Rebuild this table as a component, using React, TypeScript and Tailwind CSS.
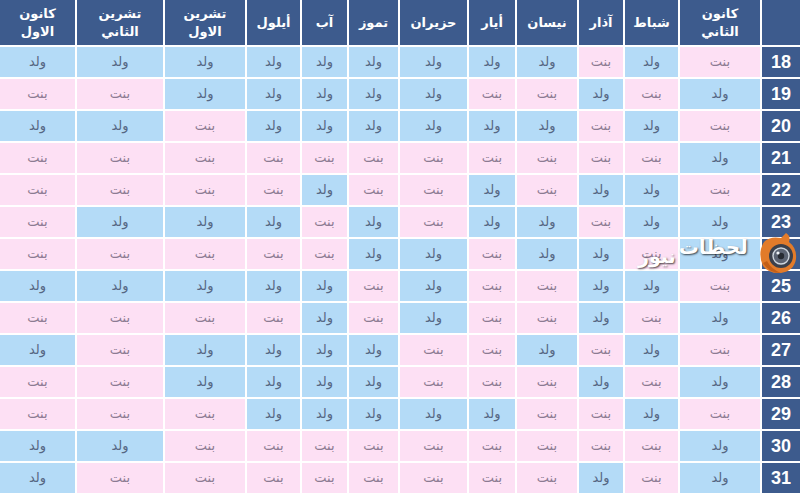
const months = [
  'كانون الاول',
  'تشرين الثاني',
  'تشرين الاول',
  'أيلول',
  'آب',
  'تموز',
  'حزيران',
  'أيار',
  'نيسان',
  'آذار',
  'شباط',
  'كانون الثاني',
]

const twoLine: Record<string, [string, string]> = {
  'كانون الاول': ['كانون', 'الاول'],
  'تشرين الثاني': ['تشرين', 'الثاني'],
  'تشرين الاول': ['تشرين', 'الاول'],
  'كانون الثاني': ['كانون', 'الثاني'],
}

// W = ولد, B = بنت, left to right as shown
const rows: [number, string][] = [
  [18, 'WWWWWWWWWBWB'],
  [19, 'BBWWWWWBBWBW'],
  [20, 'WWBWWWWWWBWB'],
  [21, 'BBBBBBBBBBBW'],
  [22, 'BBBBWBBWBWWB'],
  [23, 'BWWWBWBWWBWW'],
  [24, 'BBBBBWWBWWBW'],
  [25, 'WWWWWBWBBWWB'],
  [26, 'BBBBWBWBBWBW'],
  [27, 'WBWWWWBBWBWB'],
  [28, 'BBWWWWBBBWBW'],
  [29, 'BBBWWWWWBBWB'],
  [30, 'WWBBBBBBBBBW'],
  [31, 'WBBBBBBBBWBW'],
]

function Cell({ kind }: { kind: string }) {
  const boy = kind === 'W'
  return (
    <div
      className={
        boy
          ? 'flex items-center justify-center bg-[#b4dbf7] text-[#566783] text-[13px]'
          : 'flex items-center justify-center bg-[#fde0f4] text-[#8c7b92] text-[13px]'
      }
      dir="rtl"
    >
      {boy ? 'ولد' : 'بنت'}
    </div>
  )
}

function Logo() {
  return (
    <svg width="40" height="42" viewBox="0 0 40 42">
      <path
        d="M6 8 Q12 3 22 5 L27 0 Q32 3 30 9 Q38 15 37 26 Q35 38 22 40 Q10 41 4 33 Q0 24 2 16 Q3 11 6 8 Z"
        fill="#e27b2a"
      />
      <path d="M4 30 Q10 40 22 40 Q12 36 8 28 Z" fill="#c45f17" />
      <circle cx="22" cy="23" r="12" fill="#3b404b" />
      <circle cx="22" cy="23" r="8" fill="#5c6473" stroke="#cfd6de" strokeWidth="1.4" />
      <circle cx="22" cy="23" r="3.2" fill="#262a31" />
      <circle cx="19" cy="20" r="1.6" fill="#eef3f8" />
    </svg>
  )
}

export default function App() {
  return (
    <div
      className="relative w-[800px] h-[495px] overflow-hidden bg-white"
      style={{ fontFamily: '"DejaVu Sans", "Liberation Sans", sans-serif' }}
    >
      <div className="grid grid-cols-[75px_86px_80px_53px_45px_49px_67px_46px_60px_44px_53px_80px_38px] grid-rows-[45px_repeat(14,30px)] gap-[2px]">
        {months.map((m) => (
          <div
            key={m}
            dir="rtl"
            className="flex flex-col items-center justify-center bg-[#3d5b8d] text-white font-bold text-[13px] leading-[18px]"
          >
            {twoLine[m] ? (
              <>
                <span>{twoLine[m][0]}</span>
                <span>{twoLine[m][1]}</span>
              </>
            ) : (
              <span>{m}</span>
            )}
          </div>
        ))}
        <div className="bg-[#3d5b8d]" />
        {rows.map(([n, cells]) => (
          <div key={n} className="contents">
            {cells.split('').map((c, i) => (
              <Cell key={i} kind={c} />
            ))}
            <div className="flex items-center justify-center bg-[#3d5b8d] text-white font-bold text-[18px] font-['Liberation_Sans',sans-serif]">
              {n === 24 ? '' : n}
            </div>
          </div>
        ))}
      </div>

      <div className="absolute left-[759px] top-[233px]">
        <Logo />
      </div>
      <div
        dir="rtl"
        className="absolute left-[638px] top-[237px] flex items-start gap-[3px] text-white font-bold text-[20px] leading-none [text-shadow:1px_1px_2px_rgba(0,0,0,0.7)]"
      >
        <span>لحظات</span>
        <span className="mt-[10px] text-[19px]">نيوز</span>
      </div>
    </div>
  )
}
